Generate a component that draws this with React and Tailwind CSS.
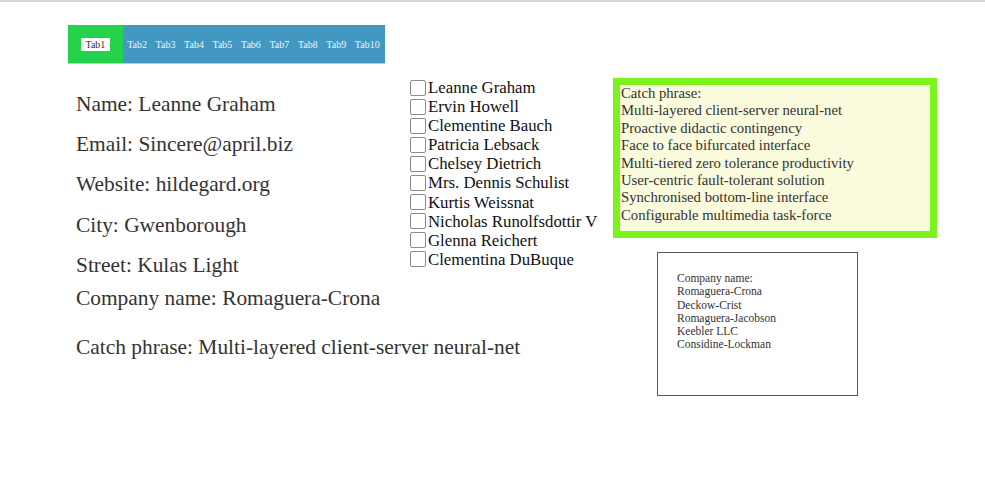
import { useState } from 'react';

const tabs = ['Tab1', 'Tab2', 'Tab3', 'Tab4', 'Tab5', 'Tab6', 'Tab7', 'Tab8', 'Tab9', 'Tab10'];

const users = [
  'Leanne Graham',
  'Ervin Howell',
  'Clementine Bauch',
  'Patricia Lebsack',
  'Chelsey Dietrich',
  'Mrs. Dennis Schulist',
  'Kurtis Weissnat',
  'Nicholas Runolfsdottir V',
  'Glenna Reichert',
  'Clementina DuBuque',
];

const catchPhrases = [
  'Multi-layered client-server neural-net',
  'Proactive didactic contingency',
  'Face to face bifurcated interface',
  'Multi-tiered zero tolerance productivity',
  'User-centric fault-tolerant solution',
  'Synchronised bottom-line interface',
  'Configurable multimedia task-force',
];

const companies = ['Romaguera-Crona', 'Deckow-Crist', 'Romaguera-Jacobson', 'Keebler LLC', 'Considine-Lockman'];

export default function App() {
  const [active, setActive] = useState(0);
  const [checked, setChecked] = useState({});

  return (
    <div className="w-full h-[478px] bg-white font-['Liberation_Serif','Times_New_Roman',serif] overflow-hidden">
      {/* linha do topo */}
      <div className="h-[2px] bg-[#d6d6d6]" />

      {/* Abas */}
      <div className="mt-[23px] ml-[68px] w-[317px] h-[39px] flex bg-[#4298c1] border-b border-[#a9d3e4] text-[10px] leading-[13px]">
        {tabs.map((tab, i) =>
          i === active ? (
            <div key={tab} className="flex items-center px-[13px] bg-[#24d24c]">
              <span className="bg-white text-[#333] px-[4.5px]">{tab}</span>
            </div>
          ) : (
            <button
              key={tab}
              onClick={() => setActive(i)}
              className="flex items-center px-[4.3px] text-[#f2f6f8]"
            >
              {tab}
            </button>
          )
        )}
      </div>

      <div className="flex items-start">
        {/* Detalhes do usuário */}
        <div className="ml-[76px] w-[334px] pt-[29px] text-[21.4px] leading-[23px] text-[#333] whitespace-nowrap">
          <p className="mb-[17px]">Name: Leanne Graham</p>
          <p className="mb-[17px]">Email: Sincere@april.biz</p>
          <p className="mb-[17.5px]">Website: hildegard.org</p>
          <p className="mb-[17.5px]">City: Gwenborough</p>
          <p className="mb-[10px]">Street: Kulas Light</p>
          <p className="mb-[26px]">Company name: Romaguera-Crona</p>
          <p>Catch phrase: Multi-layered client-server neural-net</p>
        </div>

        {/* Lista de checkboxes */}
        <div className="w-[203px] pt-[14px] text-[16.8px] leading-[19.1px] text-[#111] whitespace-nowrap">
          {users.map((name) => (
            <label
              key={name}
              className="flex items-center h-[19.1px] cursor-pointer"
              onClick={() => setChecked((c) => ({ ...c, [name]: !c[name] }))}
            >
              <span
                className={`w-[16px] h-[16px] mr-[2px] border border-[#8a8a8a] rounded-[2px] ${
                  checked[name] ? 'bg-[#1a73e8]' : 'bg-white'
                }`}
              />
              {name}
            </label>
          ))}
        </div>

        {/* Coluna direita */}
        <div className="pt-[14px]">
          <div className="w-[324px] h-[160px] border-[7px] border-[#7bf31d] bg-[#fafadc] pl-[1px] text-[14.7px] leading-[17.4px] text-[#333]">
            <p>Catch phrase:</p>
            {catchPhrases.map((c) => (
              <p key={c}>{c}</p>
            ))}
          </div>

          <div className="mt-[14px] ml-[44px] w-[201px] h-[144px] border border-[#555] pl-[19px] pt-[19px] text-[11.5px] leading-[13.3px] text-[#333]">
            <p>Company name:</p>
            {companies.map((c) => (
              <p key={c}>{c}</p>
            ))}
          </div>
        </div>
      </div>
    </div>
  );
}
